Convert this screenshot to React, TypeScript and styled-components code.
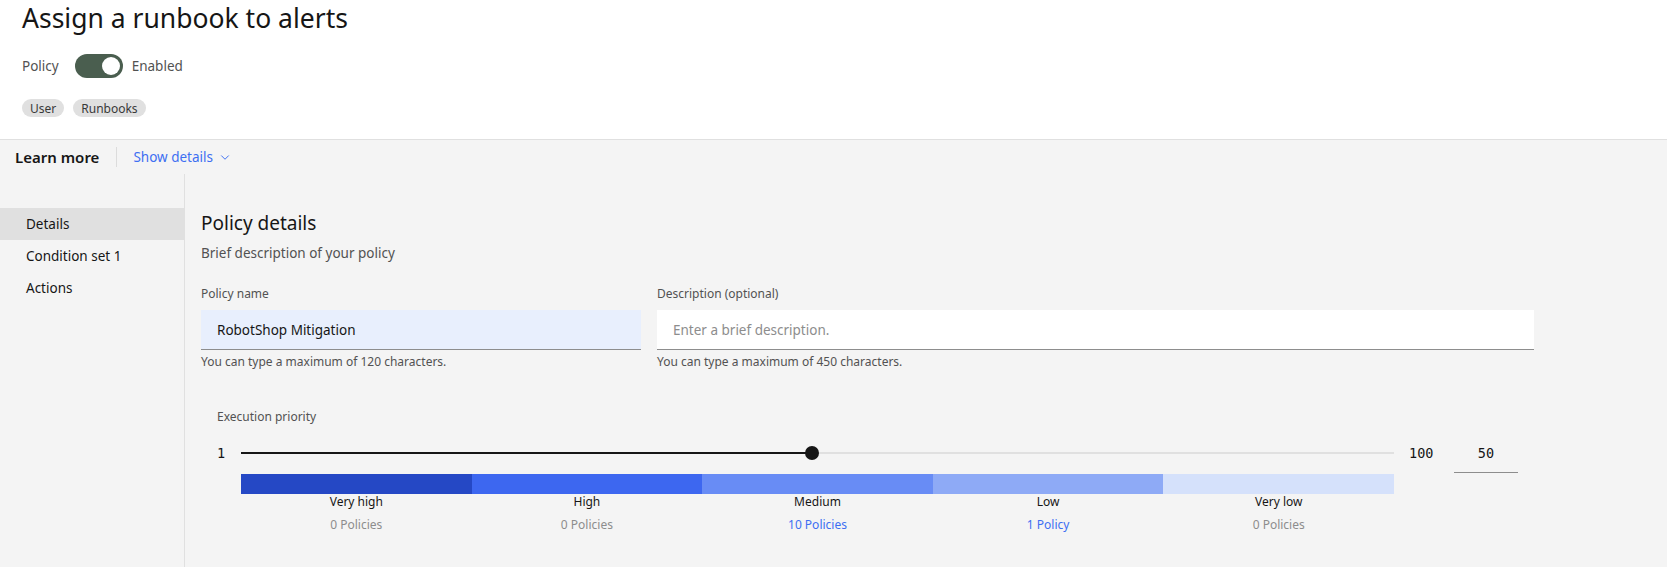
import React from "react";
import styled, { createGlobalStyle } from "styled-components";

const GlobalStyle = createGlobalStyle`
  html, body { margin: 0; padding: 0; }
  body {
    background: #f4f4f4;
    font-family: "Noto Sans", "Liberation Sans", sans-serif;
    color: #161616;
    -webkit-font-smoothing: antialiased;
  }
  * { box-sizing: border-box; }
`;

const Page = styled.div`
  display: flex;
  flex-direction: column;
  min-height: 100vh;
`;

const Header = styled.header`
  background: #ffffff;
  height: 140px;
  padding: 0 22px;
  border-bottom: 1px solid #e0e0e0;
  display: flex;
  flex-direction: column;
`;

const Title = styled.h1`
  margin: 0;
  font-size: 26.5px;
  font-weight: 400;
  line-height: 36px;
  color: #161616;
`;

const PolicyRow = styled.div`
  display: flex;
  align-items: center;
  margin-top: 18px;
  height: 24px;
  font-size: 13.5px;
  color: #525252;
`;

const Toggle = styled.span<{ $on: boolean }>`
  position: relative;
  display: inline-block;
  width: 48px;
  height: 24px;
  border-radius: 12px;
  background: ${(p) => (p.$on ? "#4a5e4f" : "#8d8d8d")};
  margin: 0 9px 0 16px;
  &::after {
    content: "";
    position: absolute;
    top: 3px;
    left: ${(p) => (p.$on ? "27px" : "3px")};
    width: 18px;
    height: 18px;
    border-radius: 50%;
    background: #ffffff;
  }
`;

const Tags = styled.div`
  display: flex;
  gap: 9px;
  margin-top: 21px;
`;

const Tag = styled.span`
  display: inline-flex;
  align-items: center;
  height: 18px;
  padding: 0 8px;
  border-radius: 9px;
  background: #e0e0e0;
  color: #393939;
  font-size: 12px;
`;

const LearnBar = styled.div`
  display: flex;
  align-items: center;
  height: 34px;
  padding-left: 15px;
`;

const LearnTitle = styled.span`
  font-size: 15px;
  font-weight: 600;
  color: #161616;
`;

const Separator = styled.span`
  width: 1px;
  height: 20px;
  background: #dcdcdc;
  margin: 0 16px 0 17px;
`;

const LinkButton = styled.span`
  display: inline-flex;
  align-items: center;
  gap: 6px;
  font-size: 13.5px;
  color: #3d6ff2;
`;

const Body = styled.div`
  flex: 1;
  display: flex;
`;

const SideNav = styled.nav`
  width: 185px;
  flex: none;
  border-right: 1px solid #e0e0e0;
  padding-top: 34px;
`;

const NavItem = styled.div<{ $active?: boolean }>`
  height: 32px;
  display: flex;
  align-items: center;
  padding-left: 26px;
  font-size: 13.5px;
  color: #161616;
  background: ${(p) => (p.$active ? "#e0e0e0" : "transparent")};
`;

const Main = styled.main`
  flex: 1;
  padding: 35px 0 0 16px;
`;

const Heading = styled.h2`
  margin: 0;
  font-size: 19px;
  font-weight: 400;
  line-height: 28px;
  color: #161616;
`;

const Subtitle = styled.p`
  margin: 7px 0 0;
  font-size: 13.5px;
  line-height: 18px;
  color: #525252;
`;

const FieldRow = styled.div`
  display: flex;
  gap: 16px;
  margin-top: 24px;
`;

const Field = styled.div<{ $w: number }>`
  width: ${(p) => p.$w}px;
  display: flex;
  flex-direction: column;
`;

const Label = styled.label`
  display: block;
  font-size: 12px;
  line-height: 16px;
  color: #525252;
`;

const Input = styled.input<{ $filled?: boolean }>`
  margin-top: 8px;
  height: 40px;
  border: none;
  border-bottom: 1px solid #8d8d8d;
  background: ${(p) => (p.$filled ? "#e8effd" : "#ffffff")};
  padding: 0 16px;
  font-family: inherit;
  font-size: 13.5px;
  color: #161616;
  outline: none;
  &::placeholder { color: #8d8d8d; }
`;

const Helper = styled.div`
  margin-top: 4px;
  font-size: 12px;
  line-height: 16px;
  color: #525252;
`;

const Priority = styled.section`
  margin: 39px 0 0 16px;
`;

const SliderGrid = styled.div`
  display: grid;
  grid-template-columns: 24px 1153px 60px 64px;
  row-gap: 1px;
  margin-top: 16px;
`;

const Mono = styled.span`
  font-family: "DejaVu Sans Mono", "Liberation Mono", monospace;
  font-size: 13.5px;
  line-height: 24px;
  color: #161616;
`;

const MaxLabel = styled(Mono)`
  padding-left: 15px;
`;

const Track = styled.div`
  position: relative;
  height: 24px;
  &::before {
    content: "";
    position: absolute;
    left: 0;
    right: 0;
    top: 11px;
    height: 2px;
    background: #e0e0e0;
  }
`;

const TrackFill = styled.div`
  position: absolute;
  left: 0;
  top: 11px;
  height: 2px;
  background: #161616;
`;

const Thumb = styled.div`
  position: absolute;
  top: 5px;
  width: 14px;
  height: 14px;
  margin-left: -7px;
  border-radius: 50%;
  background: #161616;
`;

const NumBox = styled.div`
  height: 32px;
  border-bottom: 1px solid #8d8d8d;
  display: flex;
  justify-content: center;
  align-items: flex-start;
`;

const Bands = styled.div`
  grid-column: 2;
  display: grid;
  grid-template-columns: repeat(5, 1fr);
`;

const Band = styled.div`
  display: flex;
  flex-direction: column;
  align-items: center;
`;

const BandBar = styled.div<{ $color: string }>`
  align-self: stretch;
  height: 20px;
  background: ${(p) => p.$color};
`;

const BandName = styled.div`
  font-size: 12px;
  line-height: 16px;
  color: #161616;
`;

const BandCount = styled.div<{ $link: boolean }>`
  margin-top: 7px;
  font-size: 12px;
  line-height: 16px;
  color: ${(p) => (p.$link ? "#3d6ff2" : "#8d8d8d")};
`;

const bands = [
  { name: "Very high", count: "0 Policies", color: "#2548c5", link: false },
  { name: "High", count: "0 Policies", color: "#3d67f0", link: false },
  { name: "Medium", count: "10 Policies", color: "#688cf5", link: true },
  { name: "Low", count: "1 Policy", color: "#8eaaf6", link: true },
  { name: "Very low", count: "0 Policies", color: "#d5e1fb", link: false },
];

const Chevron = () => (
  <svg width="12" height="12" viewBox="0 0 16 16" fill="none">
    <path d="M3 6l5 5 5-5" stroke="currentColor" strokeWidth="1.3" />
  </svg>
);

export default function App() {
  const value = 50;
  const pct = ((value - 1) / 99) * 100;
  return (
    <Page>
      <GlobalStyle />
      <Header>
        <Title>Assign a runbook to alerts</Title>
        <PolicyRow>
          Policy
          <Toggle $on />
          Enabled
        </PolicyRow>
        <Tags>
          <Tag>User</Tag>
          <Tag>Runbooks</Tag>
        </Tags>
      </Header>
      <LearnBar>
        <LearnTitle>Learn more</LearnTitle>
        <Separator />
        <LinkButton>
          Show details <Chevron />
        </LinkButton>
      </LearnBar>
      <Body>
        <SideNav>
          <NavItem $active>Details</NavItem>
          <NavItem>Condition set 1</NavItem>
          <NavItem>Actions</NavItem>
        </SideNav>
        <Main>
          <Heading>Policy details</Heading>
          <Subtitle>Brief description of your policy</Subtitle>
          <FieldRow>
            <Field $w={440}>
              <Label>Policy name</Label>
              <Input $filled defaultValue="RobotShop Mitigation" />
              <Helper>You can type a maximum of 120 characters.</Helper>
            </Field>
            <Field $w={877}>
              <Label>Description (optional)</Label>
              <Input placeholder="Enter a brief description." />
              <Helper>You can type a maximum of 450 characters.</Helper>
            </Field>
          </FieldRow>
          <Priority>
            <Label>Execution priority</Label>
            <SliderGrid>
              <Mono>1</Mono>
              <Track>
                <TrackFill style={{ width: `${pct}%` }} />
                <Thumb style={{ left: `${pct}%` }} />
              </Track>
              <MaxLabel>100</MaxLabel>
              <NumBox>
                <Mono>{value}</Mono>
              </NumBox>
              <Bands>
                {bands.map((b) => (
                  <Band key={b.name}>
                    <BandBar $color={b.color} />
                    <BandName>{b.name}</BandName>
                    <BandCount $link={b.link}>{b.count}</BandCount>
                  </Band>
                ))}
              </Bands>
            </SliderGrid>
          </Priority>
        </Main>
      </Body>
    </Page>
  );
}
